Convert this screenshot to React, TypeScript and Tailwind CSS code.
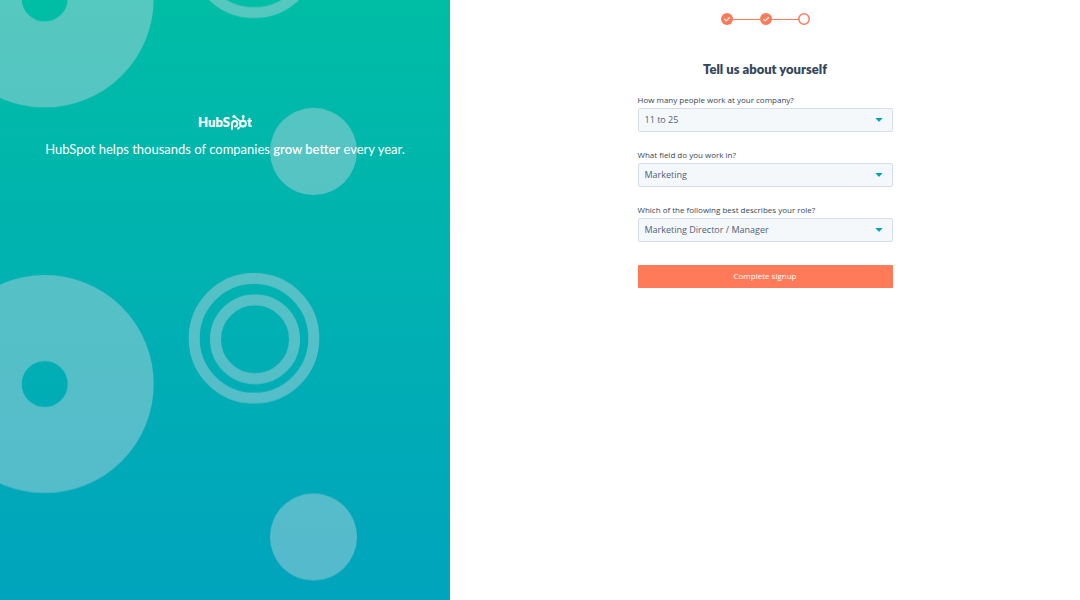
import { useState } from "react";

type Field = { id: string; label: string; options: string[] };

const fields: Field[] = [
  {
    id: "company-size",
    label: "How many people work at your company?",
    options: ["11 to 25", "1", "2 to 5", "6 to 10", "26 to 50", "51 to 200"],
  },
  {
    id: "work-field",
    label: "What field do you work in?",
    options: ["Marketing", "Sales", "Customer Service", "Engineering"],
  },
  {
    id: "role",
    label: "Which of the following best describes your role?",
    options: ["Marketing Director / Manager", "Marketing Specialist", "Executive"],
  },
];

function Bubbles() {
  return (
    <svg className="absolute inset-0 h-full w-full" aria-hidden="true">
      <defs>
        <pattern id="bubbles" width="2000" height="385.5" y="214" patternUnits="userSpaceOnUse">
          <g fill="none" stroke="#cbd6e2" strokeOpacity="0.42">
            <circle cx="44.7" cy="170" r="66" strokeWidth="86" />
            <circle cx="254" cy="124.3" r="59.8" strokeWidth="11" />
            <circle cx="255" cy="125.3" r="39.5" strokeWidth="11" />
          </g>
          <circle cx="313.5" cy="323" r="43.5" fill="#cbd6e2" fillOpacity="0.42" />
        </pattern>
      </defs>
      <rect width="100%" height="100%" fill="url(#bubbles)" />
    </svg>
  );
}

function Logo() {
  return (
    <svg width="54" height="18" viewBox="0 0 54 18" role="img" aria-label="HubSpot" className="block">
      <g fill="#fff" className="font-[Lato,sans-serif] text-[13px] font-extrabold">
        <text x="0" y="15">HubS</text>
        <text x="49" y="15">t</text>
      </g>
      <g fill="none" stroke="#fff" strokeLinecap="round">
        <path d="M34 17V11.6a2.7 2.7 0 1 1 2.7 2.8" strokeWidth="1.9" />
        <circle cx="45" cy="11.6" r="2.9" strokeWidth="2" />
        <path d="M45.2 8.7V4.8M42.8 9.6L36.2 4.6M42.8 13.9L40.4 16.3" strokeWidth="1.4" />
      </g>
      <g fill="#fff">
        <circle cx="36" cy="4.4" r="1.6" />
        <circle cx="45.2" cy="4.5" r="1.5" />
        <circle cx="40.2" cy="16.4" r="1.2" />
      </g>
    </svg>
  );
}

function StepDone() {
  return (
    <svg width="12" height="12" viewBox="0 0 12 12" aria-hidden="true">
      <circle cx="6" cy="6" r="6" fill="#ff7a59" />
      <path d="M3.6 6.4L5.2 7.9L8.5 4.5" fill="none" stroke="#fff" strokeWidth="1.1" strokeLinecap="round" strokeLinejoin="round" />
    </svg>
  );
}

function Steps() {
  return (
    <ol className="flex items-center" aria-label="Signup progress">
      <li className="flex items-center">
        <StepDone />
        <span className="h-px w-[27px] bg-[#ff7a59]" />
      </li>
      <li className="flex items-center">
        <StepDone />
        <span className="h-px w-[26px] bg-[#ff7a59]" />
      </li>
      <li>
        <svg width="12" height="12" viewBox="0 0 12 12" className="block" aria-hidden="true">
          <circle cx="6" cy="6" r="5.2" fill="#fff" stroke="#ff7a59" strokeWidth="1.5" />
        </svg>
      </li>
    </ol>
  );
}

function SelectField({ field }: { field: Field }) {
  const [value, setValue] = useState(field.options[0]);
  return (
    <div>
      <label htmlFor={field.id} className="block text-[8px] leading-4 font-medium text-[#33475b]">
        {field.label}
      </label>
      <div className="relative">
        <select
          id={field.id}
          value={value}
          onChange={(e) => setValue(e.target.value)}
          className="block h-6 w-full appearance-none rounded-xs border border-[#d5dee8] bg-[#f5f8fa] px-[6px] pb-px text-[9px] text-[#506176]"
        >
          {field.options.map((option) => (
            <option key={option}>{option}</option>
          ))}
        </select>
        <svg width="8" height="4" viewBox="0 0 8 4" className="pointer-events-none absolute top-[10px] right-[10px]" aria-hidden="true">
          <path d="M1 0H7Q7.6 0 7.2 0.5L4.4 3.6Q4 4 3.6 3.6L0.8 0.5Q0.4 0 1 0Z" fill="#00a4bd" />
        </svg>
      </div>
    </div>
  );
}

export default function App() {
  return (
    <div className="flex min-h-screen bg-white font-['Open_Sans',sans-serif]">
      <aside className="relative w-5/12 overflow-hidden bg-linear-to-b from-[#00bda5] to-[#00a4bd]">
        <Bubbles />
        <div className="relative flex flex-col items-center gap-2 pt-[112px] text-white">
          <Logo />
          <p className="text-center font-[Lato,sans-serif] text-[13px] leading-[22px]">
            HubSpot helps thousands of companies <strong className="font-semibold">grow better</strong> every year.
          </p>
        </div>
      </aside>
      <main className="flex flex-1 flex-col items-center pt-[13px]">
        <Steps />
        <h1 className="mt-9 font-[Lato,sans-serif] text-[13px] leading-4 font-extrabold text-[#33475b]">Tell us about yourself</h1>
        <form className="mt-[15px] flex w-full max-w-[255px] flex-col" onSubmit={(e) => e.preventDefault()}>
          <div className="flex flex-col gap-[15px]">
            {fields.map((field) => (
              <SelectField key={field.id} field={field} />
            ))}
          </div>
          <button type="submit" className="mt-[23px] h-[23px] rounded-[1px] bg-[#ff7a59] pb-px text-[8px] text-white">
            Complete signup
          </button>
        </form>
      </main>
    </div>
  );
}
